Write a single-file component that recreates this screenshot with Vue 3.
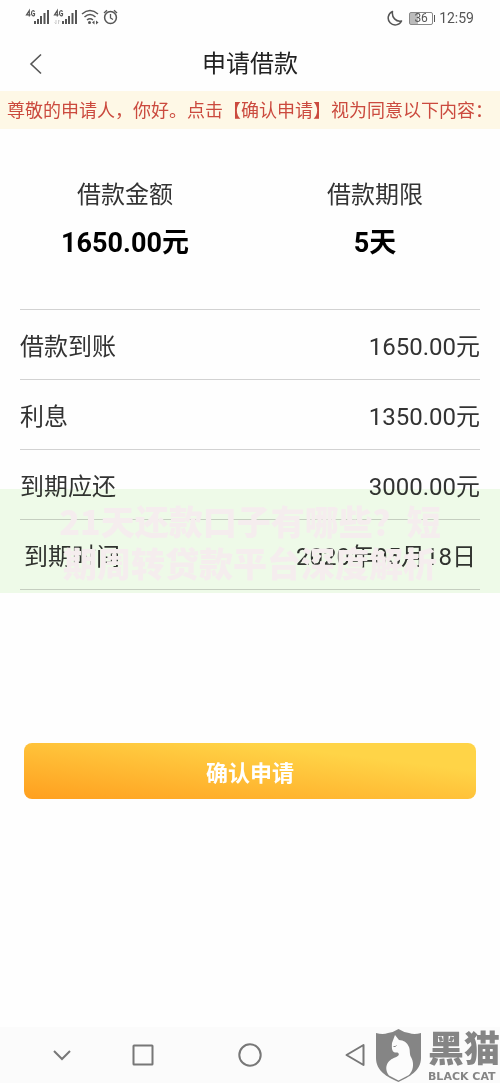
<script setup>
const summary = [
  { label: '借款金额', value: '1650.00元' },
  { label: '借款期限', value: '5天' },
]
const details = [
  { label: '借款到账', value: '1650.00元' },
  { label: '利息', value: '1350.00元' },
  { label: '到期应还', value: '3000.00元' },
  { label: '到期时间', value: '2020年05月18日', inset: true },
]
</script>

<template>
  <div class="page">
    <div class="status">
      <svg class="signals" width="94" height="20" viewBox="0 0 94 20">
        <g fill="none" stroke="#555" stroke-width="1.200">
          <path d="M4.300 8.500V2.500L1.500 6.800h4M9.500 3.800C8.800 2 6.500 2.200 6.500 5.200S9 8.300 9.500 7V5.500H8" />
          <path d="M32.300 8.500V2.500L29.500 6.800h4M37.500 3.800C36.800 2 34.500 2.200 34.500 5.200S37 8.300 37.500 7V5.500H36" />
        </g>
        <g fill="#555">
          <path d="M9 13h2v3h-2zM12 11h2v5h-2zM15 8h2v8h-2zM18.500 5h2v11h-2zM22 2h2v14h-2z" />
          <path d="M37 13h2v3h-2zM40 11h2v5h-2zM43 8h2v8h-2zM46.500 5h2v11h-2zM50 2h2v14h-2z" />
          <circle cx="64.500" cy="14.500" r="1.500" />
          <path d="M67 14.500l2.500-2v4zM73.500 14.500l-2.500-2v4z" />
        </g>
        <path d="M31 12v4M29.500 14.500l1.500 1.500M33.500 16v-4l1.500 1.500" fill="none" stroke="#ccc" />
        <g fill="none" stroke="#555" stroke-width="1.500">
          <path d="M57 6Q65-1 73 6M59.500 9Q65 4 70.500 9M62 12Q65 9.500 68 12" />
          <circle cx="85.500" cy="9.500" r="5.900" />
          <path d="M85.500 6v4l2.500 1.500M79 5l3-2.800M92 5l-3-2.800" stroke-width="1.300" />
        </g>
      </svg>
      <div class="status-right">
        <svg width="16" height="16" viewBox="0 0 16 16">
          <path d="M5.500 1.500A7 7 0 1 0 14.500 11C9 12 4.500 7.500 5.500 1.500Z" fill="none" stroke="#555" stroke-width="1.500" stroke-linejoin="round" />
        </svg>
        <span class="battery">36</span>
        <time>12:59</time>
      </div>
    </div>

    <header class="titlebar">
      <button class="back" type="button" aria-label="返回">
        <svg width="14" height="22" viewBox="0 0 14 22"><path d="M12 1.500 2 11l10 9.500" fill="none" stroke="#555" stroke-width="1.600" /></svg>
      </button>
      <h1>申请借款</h1>
    </header>

    <p class="notice">尊敬的申请人，你好。点击【确认申请】视为同意以下内容：</p>

    <main>
      <dl class="summary">
        <div v-for="s in summary" :key="s.label">
          <dt>{{ s.label }}</dt>
          <dd>{{ s.value }}</dd>
        </div>
      </dl>

      <section class="detail-area">
        <dl class="details">
          <div v-for="d in details" :key="d.label" :class="{ inset: d.inset }">
            <dt>{{ d.label }}</dt>
            <dd>{{ d.value }}</dd>
          </div>
        </dl>
        <div class="tint"></div>
        <p class="caption">21天还款口子有哪些？短<br />期周转贷款平台深度解析</p>
      </section>

      <button class="confirm" type="button">确认申请</button>
    </main>

    <nav class="navbar">
      <button type="button" aria-label="收起">
        <svg width="20" height="12" viewBox="0 0 20 12"><path d="m2 2 8 8 8-8" /></svg>
      </button>
      <button type="button" aria-label="最近任务">
        <svg width="22" height="22" viewBox="0 0 22 22"><rect x="1.500" y="1.500" width="19" height="19" rx=".5" /></svg>
      </button>
      <button type="button" aria-label="主页">
        <svg width="24" height="24" viewBox="0 0 24 24"><circle cx="12" cy="12" r="10.700" /></svg>
      </button>
      <button type="button" aria-label="返回上一页">
        <svg width="20" height="24" viewBox="0 0 20 24"><path d="M18.500 2v20L1.500 12Z" stroke-linejoin="round" /></svg>
      </button>
    </nav>

    <div class="brand">
      <svg width="47" height="54" viewBox="0 0 47 54">
        <path d="M1 4Q8 6 13 4 19 3 23.500 0 28 3 34 4 39 6 46 4V29C46 42 34 48 23.500 53 12 48 1 42 1 29Z" fill="#858585" />
        <path d="M20 6 24 11Q31 11 34 18C35.500 22 34 25 36.500 29 39.500 35 38 42 34 46L23.500 51.500 14 46.500C8 38 13 31 20 28.500 24 27 25 25 22.500 23.500 17 24 16.500 20.500 17 14 19 11Z" fill="#fcfcfc" />
        <path d="M18.500 17.500q2 .5 3-1" fill="none" stroke="#858585" stroke-width="1" />
      </svg>
      <div class="brand-text">
        <span class="brand-cn">黑猫</span>
        <span class="brand-en">BLACK CAT</span>
      </div>
    </div>
  </div>
</template>

<style>
body {
  margin: 0;
}
</style>

<style scoped>
.page {
  position: relative;
  display: flex;
  flex-direction: column;
  min-height: 100vh;
  background: #fefefe;
  color: #333;
  font-family: Roboto, "Noto Sans CJK SC", sans-serif;
}
h1, p, dl, dd {
  margin: 0;
}
button {
  padding: 0;
  border: 0;
  background: none;
  font-family: inherit;
}
svg {
  display: block;
}
.status {
  display: flex;
  justify-content: space-between;
  align-items: center;
  height: 36px;
  padding: 0 26px 0 25px;
}
.status-right {
  display: flex;
  align-items: center;
  gap: 6px;
  color: #555;
}
.status-right time {
  font-size: 14px;
  line-height: 20px;
}
.battery {
  position: relative;
  box-sizing: border-box;
  width: 24px;
  height: 13px;
  border: 1px solid #888;
  border-radius: 2px;
  background: linear-gradient(90deg, #bbb 36%, #fefefe 36%);
  font-size: 12px;
  line-height: 11px;
  text-align: center;
}
.battery::after {
  content: "";
  position: absolute;
  top: 2px;
  right: -3px;
  width: 1px;
  height: 7px;
  background: #555;
}
.titlebar {
  display: grid;
  grid-template-columns: 72px 1fr 72px;
  align-items: center;
  height: 55px;
}
.back {
  display: grid;
  place-items: center;
  height: 44px;
}
.titlebar h1 {
  color: #222;
  font-size: 24px;
  font-weight: 400;
  line-height: 36px;
  text-align: center;
}
.notice {
  padding: 1px 7px 0;
  background: #fef8e6;
  color: #cb4a3e;
  font-size: 18px;
  line-height: 37px;
  white-space: nowrap;
  overflow: hidden;
}
main {
  flex: 1;
}
.summary {
  display: grid;
  grid-template-columns: 1fr 1fr;
  padding: 48px 0;
  text-align: center;
}
.summary dt {
  font-size: 24px;
  line-height: 36px;
}
.summary dd {
  padding-top: 12px;
  color: #000;
  font-size: 27px;
  font-weight: 700;
  line-height: 36px;
}
.detail-area {
  position: relative;
  padding: 0 20px;
}
.details {
  border-top: 1px solid #d2d2d2;
}
.details > div {
  display: flex;
  justify-content: space-between;
  align-items: center;
  height: 69px;
  border-bottom: 1px solid #d2d2d2;
  font-size: 24px;
}
.details > .inset {
  padding: 0 4px;
}
.tint,
.caption {
  position: absolute;
  right: 0;
  bottom: -3px;
  left: 0;
  height: 104px;
}
.tint {
  background: #effbe9;
  mix-blend-mode: multiply;
}
.caption {
  box-sizing: border-box;
  padding: 11px 0;
  color: #f5edee;
  font-family: "Noto Sans CJK SC", sans-serif;
  font-size: 34px;
  font-weight: 900;
  line-height: 42px;
  text-align: center;
  white-space: nowrap;
}
.confirm {
  display: block;
  width: calc(100% - 48px);
  height: 56px;
  margin: 153px 24px 48px;
  border-radius: 8px;
  background: linear-gradient(187deg, #ffd447 25%, #ff9f1f 100%);
  color: #fff;
  font-size: 22px;
  font-weight: 700;
}
.navbar {
  display: grid;
  grid-template-columns: 80fr 82fr 132fr 78fr 106fr;
  height: 56px;
  padding-left: 22px;
  background: #fbfbfb;
}
.navbar button {
  display: grid;
  place-items: center;
}
.navbar svg {
  fill: none;
  stroke: #777;
  stroke-width: 2;
}
.brand {
  position: absolute;
  right: 0;
  bottom: 0;
  display: flex;
  gap: 6px;
  color: #858585;
}
.brand-text {
  display: flex;
  flex-direction: column;
}
.brand-cn {
  font-size: 36px;
  font-weight: 900;
  line-height: 42px;
}
.brand-en {
  font-family: "DejaVu Sans", sans-serif;
  font-size: 11px;
  font-weight: 700;
  line-height: 12px;
  white-space: nowrap;
}
</style>
